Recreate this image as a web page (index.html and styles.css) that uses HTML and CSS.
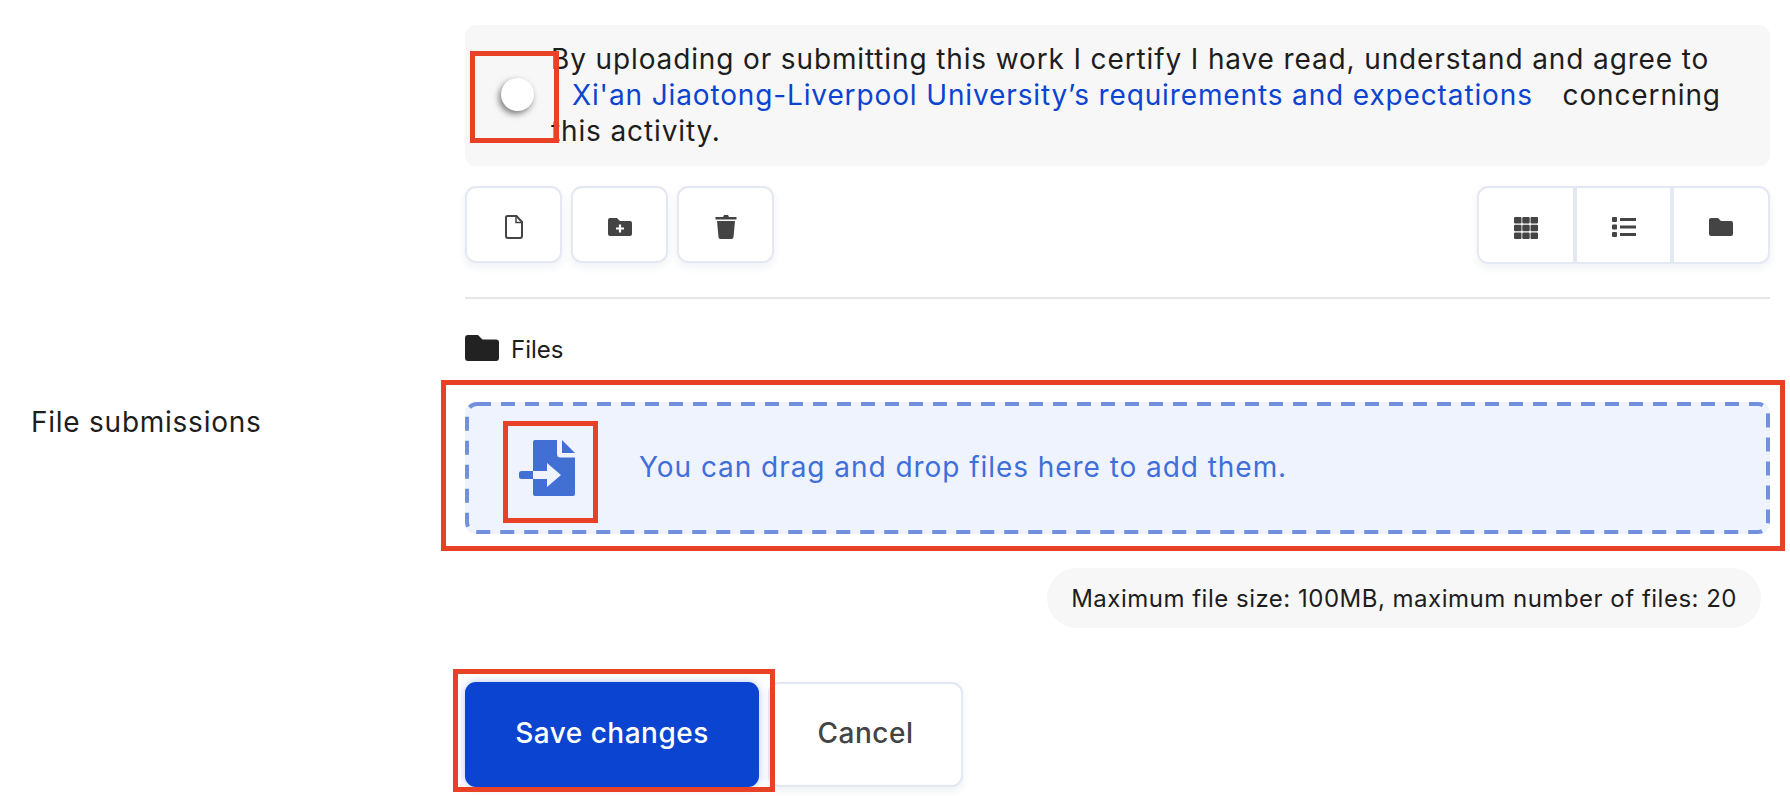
FILE: index.html
```html
<!DOCTYPE html>
<html lang="en">
<head>
<meta charset="utf-8">
<title>File submissions</title>
<link rel="stylesheet" href="styles.css">
</head>
<body>
<main class="page">
  <div class="row">
    <div class="label-col"></div>
    <div class="content-col">
      <section class="statement">
        <span class="knob"></span>
        <p class="statement-text">By uploading or submitting this work I certify I have read, understand and agree to<br><a class="statement-link" href="#">Xi'an Jiaotong-Liverpool University’s requirements and expectations</a> concerning<br>this activity.</p>
      </section>
      <div class="toolbar">
        <div class="btn-group">
          <button class="tool-btn" type="button" aria-label="Add file">
            <svg class="icon-file" viewBox="0 0 18 24"><path d="M2.5 1h9L17 7v14a2 2 0 0 1-2 2H3a2 2 0 0 1-2-2V2.500A1.500 1.500 0 0 1 2.500 1z" fill="none" stroke="#444" stroke-width="2"/><path d="M11 1v6.500h6" fill="none" stroke="#444" stroke-width="1.500"/></svg>
          </button>
          <button class="tool-btn" type="button" aria-label="Create folder">
            <svg class="icon-folder-plus" viewBox="0 0 24 18"><path d="M2 0h7l3 3h10a2 2 0 0 1 2 2v11a2 2 0 0 1-2 2H2a2 2 0 0 1-2-2V2a2 2 0 0 1 2-2z" fill="#444"/><path d="M12 6.500v8M8 10.500h8" stroke="#fff" stroke-width="2.200"/></svg>
          </button>
          <button class="tool-btn" type="button" aria-label="Delete">
            <svg class="icon-trash" viewBox="0 0 22 24"><path d="M0.500 2h7.500L9 0h4l1 2h7.500v2.500H.5z" fill="#444"/><path d="M2 6h18l-1.500 16a2 2 0 0 1-2 2H5.500a2 2 0 0 1-2-2z" fill="#444"/></svg>
          </button>
        </div>
        <div class="view-group">
          <button class="view-btn" type="button" aria-label="Icon view">
            <svg class="icon-grid" viewBox="0 0 24 22"><path d="M1 0h5.500a1 1 0 0 1 1 1v4.500a1 1 0 0 1-1 1H1a1 1 0 0 1-1-1V1a1 1 0 0 1 1-1zM9.300 0h5.400a1 1 0 0 1 1 1v4.500a1 1 0 0 1-1 1H9.300a1 1 0 0 1-1-1V1a1 1 0 0 1 1-1zM17.500 0H23a1 1 0 0 1 1 1v4.500a1 1 0 0 1-1 1h-5.500a1 1 0 0 1-1-1V1a1 1 0 0 1 1-1zM1 7.700h5.500a1 1 0 0 1 1 1v4.600a1 1 0 0 1-1 1H1a1 1 0 0 1-1-1V8.700a1 1 0 0 1 1-1zM9.300 7.700h5.400a1 1 0 0 1 1 1v4.600a1 1 0 0 1-1 1H9.300a1 1 0 0 1-1-1V8.700a1 1 0 0 1 1-1zM17.500 7.700H23a1 1 0 0 1 1 1v4.600a1 1 0 0 1-1 1h-5.500a1 1 0 0 1-1-1V8.700a1 1 0 0 1 1-1zM1 15.500h5.500a1 1 0 0 1 1 1V21a1 1 0 0 1-1 1H1a1 1 0 0 1-1-1v-4.500a1 1 0 0 1 1-1zM9.300 15.500h5.400a1 1 0 0 1 1 1V21a1 1 0 0 1-1 1H9.300a1 1 0 0 1-1-1v-4.500a1 1 0 0 1 1-1zM17.500 15.500H23a1 1 0 0 1 1 1V21a1 1 0 0 1-1 1h-5.500a1 1 0 0 1-1-1v-4.500a1 1 0 0 1 1-1z" fill="#444"/></svg>
          </button>
          <button class="view-btn" type="button" aria-label="List view">
            <svg class="icon-list" viewBox="0 0 24 20"><path d="M1 0h3a1 1 0 0 1 1 1v3a1 1 0 0 1-1 1H1a1 1 0 0 1-1-1V1a1 1 0 0 1 1-1zM1 7.500h3a1 1 0 0 1 1 1v3a1 1 0 0 1-1 1H1a1 1 0 0 1-1-1v-3a1 1 0 0 1 1-1zM1 15h3a1 1 0 0 1 1 1v3a1 1 0 0 1-1 1H1a1 1 0 0 1-1-1v-3a1 1 0 0 1 1-1zM8 1h16v3H8zM8 8.500h16v3H8zM8 16h16v3H8z" fill="#444"/></svg>
          </button>
          <button class="view-btn" type="button" aria-label="Folder view">
            <svg class="icon-folder" viewBox="0 0 24 18"><path d="M2 0h7l3 3h10a2 2 0 0 1 2 2v11a2 2 0 0 1-2 2H2a2 2 0 0 1-2-2V2a2 2 0 0 1 2-2z" fill="#444"/></svg>
          </button>
        </div>
      </div>
      <hr class="divider">
    </div>
  </div>
  <div class="row">
    <div class="label-col"><span class="field-label">File submissions</span></div>
    <div class="content-col">
      <div class="path">
        <svg class="icon-path-folder" viewBox="0 0 34 26"><path d="M3 0h10l4.500 4.500H31a3 3 0 0 1 3 3V23a3 3 0 0 1-3 3H3a3 3 0 0 1-3-3V3a3 3 0 0 1 3-3z" fill="#222"/></svg>
        <span class="path-name">Files</span>
      </div>
      <div class="dropzone">
        <svg class="dash" width="1305" height="132"><rect x="2" y="2" width="1301" height="128" rx="10" ry="10" fill="none" stroke="#7290de" stroke-width="4" stroke-dasharray="14 10"/></svg>
        <svg class="icon-upload" viewBox="0 0 56 56"><path d="M16 0h22v14a3.500 3.500 0 0 0 3.500 3.500H56V54a2 2 0 0 1-2 2H16a2 2 0 0 1-2-2V39h14v8l14-12-14-12v8H14V2a2 2 0 0 1 2-2z" fill="#426fd4"/><path d="M43 0l13 13H43z" fill="#426fd4"/><path d="M2.500 31H14v8H2.500A2.500 2.500 0 0 1 0 36.500v-3A2.500 2.500 0 0 1 2.500 31z" fill="#426fd4"/></svg>
        <span class="drop-text">You can drag and drop files here to add them.</span>
      </div>
      <div class="limit">Maximum file size: 100MB, maximum number of files: 20</div>
      <div class="actions">
        <button class="btn-primary" type="button">Save changes</button>
        <button class="btn-secondary" type="button">Cancel</button>
      </div>
    </div>
  </div>
</main>
<div class="mark mark-toggle"></div>
<div class="mark mark-zone"></div>
<div class="mark mark-icon"></div>
<div class="mark mark-save"></div>
</body>
</html>
```
FILE: styles.css
```css
* { box-sizing: border-box; }
html, body { margin: 0; padding: 0; background: #fff; }
body {
  width: 1790px;
  height: 796px;
  overflow: hidden;
  position: relative;
  font-family: "Inter", "Liberation Sans", sans-serif;
  color: #1d1d1d;
}
.page { padding: 25px 20px 0 31px; }
.row { display: grid; grid-template-columns: 434px 1305px; }
.content-col { display: flex; flex-direction: column; }

.statement {
  display: flex;
  align-items: center;
  height: 141px;
  background: #f7f7f7;
  border-radius: 11px;
}
.knob {
  flex: none;
  width: 33px;
  height: 33px;
  margin: -2px 17px 0 36px;
  border-radius: 50%;
  background: #fff;
  box-shadow: -2px 3px 6px rgba(0,0,0,.5);
}
.statement-text {
  margin: -2px 0 0;
  font-size: 28px;
  line-height: 36px;
  white-space: nowrap;
  letter-spacing: .87px;
}
.statement-link {
  color: #0a44d0;
  text-decoration: none;
  margin: 0 21px;
}

.toolbar {
  display: flex;
  justify-content: space-between;
  margin-top: 20px;
}
.btn-group { display: flex; gap: 9px; }
.tool-btn, .view-group {
  background: #fff;
  border: 2px solid #e4e8f3;
  border-radius: 11px;
  box-shadow: 0 4px 8px rgba(30,50,110,.07);
}
.tool-btn {
  width: 97px;
  height: 77px;
  padding: 0;
  display: flex;
  align-items: center;
  justify-content: center;
}
.view-group { display: flex; height: 78px; width: 293px; }
.view-btn {
  flex: 1;
  padding: 0;
  background: none;
  border: 0;
  border-left: 4px solid #e4e8f3;
  display: flex;
  align-items: center;
  justify-content: center;
}
.view-btn:first-child { border-left: 0; }
.icon-file { width: 18px; height: 24px; margin-top: 5px; }
.icon-folder-plus { width: 24px; height: 18px; margin-top: 5px; }
.icon-trash { width: 22px; height: 24px; margin-top: 5px; }
.icon-grid { width: 24px; height: 22px; margin-top: 5px; }
.icon-list { width: 24px; height: 20px; margin-top: 3px; }
.icon-folder { width: 24px; height: 18px; margin-top: 3px; }

.divider {
  width: 100%;
  height: 2px;
  margin: 33px 0 0;
  border: 0;
  background: #e6e6e6;
}

.field-label {
  display: block;
  padding-top: 105px;
  font-size: 28px;
  line-height: 36px;
  letter-spacing: .75px;
}
.path {
  display: flex;
  align-items: center;
  gap: 12px;
  margin-top: 36px;
  height: 26px;
}
.icon-path-folder { width: 34px; height: 26px; }
.path-name { font-size: 24px; line-height: 26px; margin-top: 4px; }

.dropzone {
  position: relative;
  display: flex;
  align-items: center;
  height: 132px;
  margin-top: 41px;
  background: #eff3fe;
  border-radius: 11px;
}
.dash { position: absolute; left: 0; top: 0; }
.icon-upload {
  width: 56px;
  height: 56px;
  margin-left: 54px;
}
.drop-text {
  margin-left: 64px;
  margin-top: -2px;
  font-size: 28px;
  letter-spacing: .95px;
  color: #3f6fd8;
}

.limit {
  align-self: flex-end;
  display: flex;
  align-items: center;
  height: 60px;
  margin-top: 34px;
  margin-right: 9px;
  padding: 0 24px;
  background: #f7f7f7;
  border-radius: 30px;
  font-size: 24px;
  letter-spacing: .5px;
}

.actions { display: flex; gap: 9px; margin-top: 54px; }
.btn-primary, .btn-secondary {
  height: 105px;
  padding: 0 0 3px;
  border-radius: 11px;
  font-family: inherit;
  font-size: 28px;
  font-weight: 500;
  letter-spacing: .5px;
}
.btn-primary {
  width: 294px;
  background: #0a44d0;
  border: 0;
  color: #fff;
  box-shadow: 0 0 8px rgba(10,68,208,.3);
}
.btn-secondary {
  width: 195px;
  background: #fff;
  border: 2px solid #e4e8f3;
  color: #444;
  box-shadow: 0 4px 8px rgba(30,50,110,.07);
}

.mark {
  position: absolute;
  border: 5px solid #e94125;
  pointer-events: none;
}
.mark-toggle { left: 470px; top: 51px; width: 89px; height: 92px; }
.mark-zone { left: 441px; top: 380px; width: 1344px; height: 171px; }
.mark-icon { left: 503px; top: 421px; width: 95px; height: 102px; }
.mark-save { left: 453px; top: 669px; width: 322px; height: 123px; }
```
